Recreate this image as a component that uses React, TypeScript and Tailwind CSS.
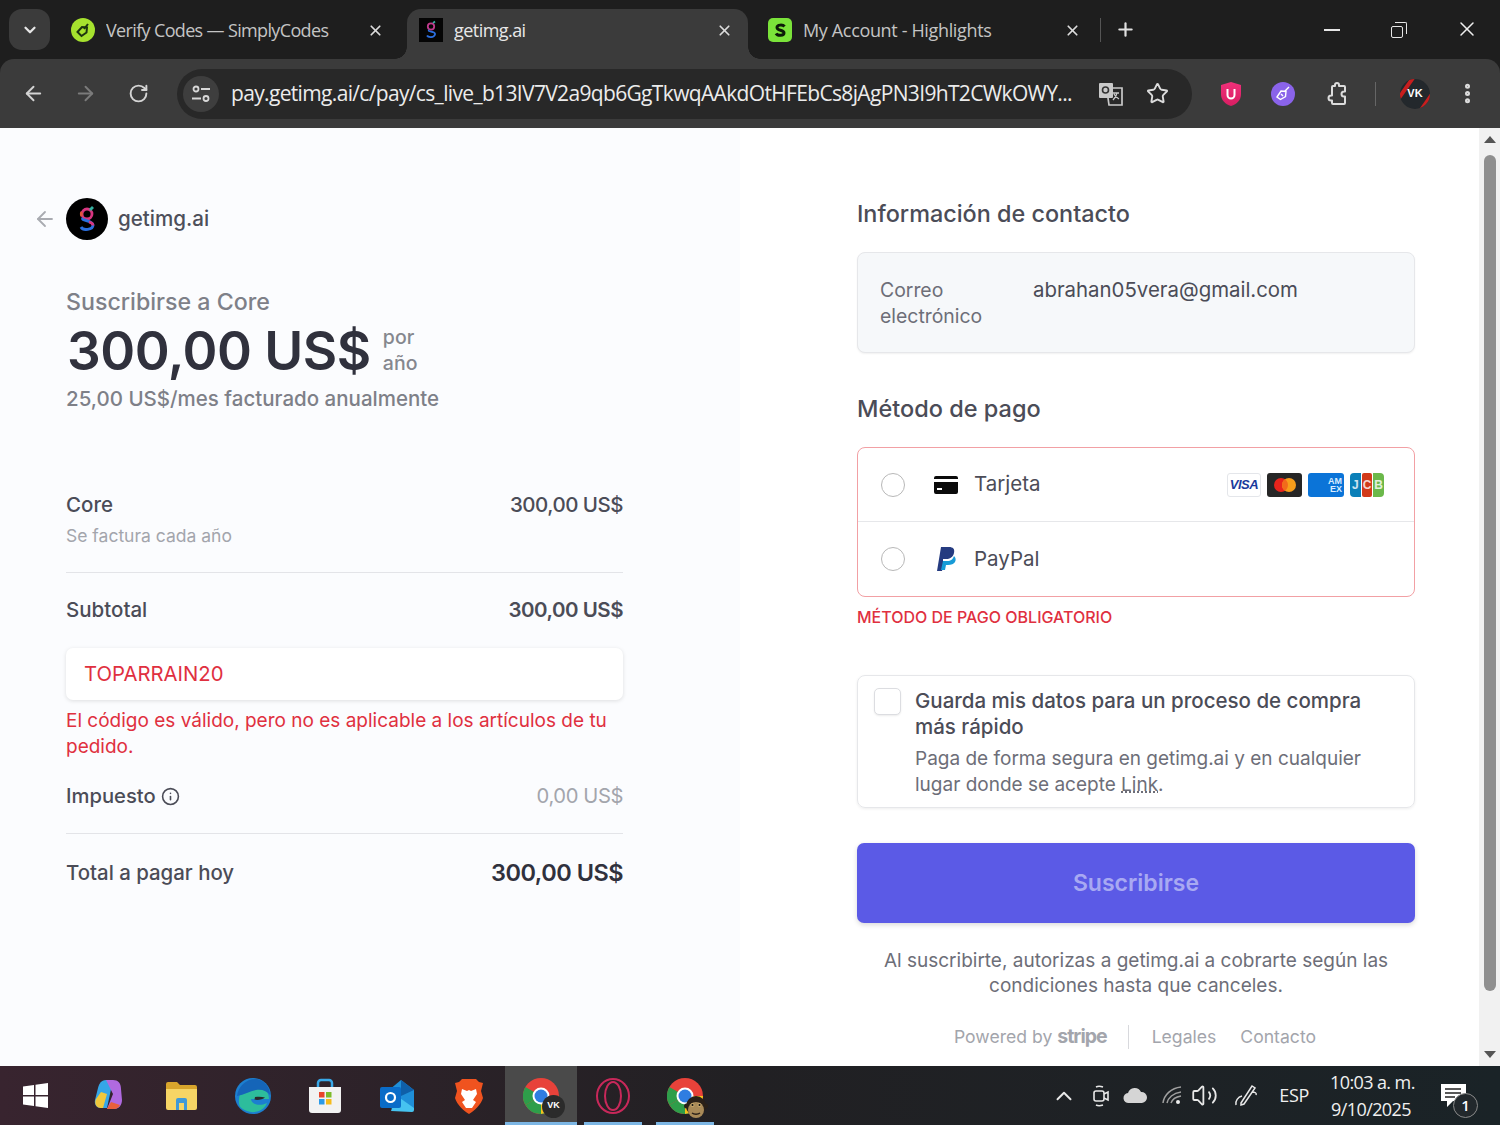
import React from "react";
import { ArrowLeft, ArrowRight, RotateCw, X, Plus, ChevronDown, Star, EllipsisVertical, ChevronUp, Volume2, Info } from "lucide-react";

const tabFont = { fontFamily: '"Open Sans","Noto Sans",sans-serif' };

function Favicon({ kind }: { kind: string }) {
  if (kind === "simply")
    return (
      <svg width="24" height="24" viewBox="0 0 24 24">
        <circle cx="12" cy="12" r="12" fill="#a6e22e" />
        <path d="M6.500 14l4.500-5 5 .5-.5 5-5 3.500z" fill="none" stroke="#1c3310" strokeWidth="2" />
        <path d="M13 11l4-5" stroke="#1c3310" strokeWidth="2" />
      </svg>
    );
  if (kind === "g")
    return (
      <svg width="24" height="24" viewBox="0 0 24 24">
        <rect width="24" height="24" fill="#050505" />
        <circle cx="12" cy="8.500" r="3.200" fill="none" stroke="#c03a8c" strokeWidth="1.800" />
        <path d="M10 12c-2 2 7 1 6 4.500s-7 3-8 1" fill="none" stroke="#2c6fe0" strokeWidth="1.800" />
        <path d="M14 5l2-1.500" stroke="#35b0a0" strokeWidth="1.600" />
      </svg>
    );
  return (
    <svg width="24" height="24" viewBox="0 0 24 24">
      <rect width="24" height="24" rx="5" fill="#7be33a" />
      <path d="M16.500 8.500C15 6.500 9 6.500 9 9.500c0 3.500 7 2 7 5.500 0 3-6.500 3-8 .5" fill="none" stroke="#0d1a08" strokeWidth="3" />
    </svg>
  );
}

function Tab({ title, kind, active, w, mr, track }: { title: string; kind: string; active?: boolean; w: string; mr: string; track: string }) {
  return (
    <div className={`${w} h-[50px] pb-[8px] flex items-center shrink-0 rounded-t-[14px] relative ${active ? "bg-[#3b3b3b]" : ""}`}>
      {active && <div className="absolute -left-[12px] bottom-0 w-[12px] h-[12px] bg-[radial-gradient(circle_at_0_0,transparent_11.5px,#3b3b3b_12px)]" />}
      {active && <div className="absolute -right-[12px] bottom-0 w-[12px] h-[12px] bg-[radial-gradient(circle_at_100%_0,transparent_11.5px,#3b3b3b_12px)]" />}
      <div className="w-[24px] shrink-0 ml-[12px]"><Favicon kind={kind} /></div>
      <span style={tabFont} className={`ml-[11px] flex-1 text-[18px] ${track} truncate ${active ? "text-[#e8e8e8]" : "text-[#c4c4c4]"}`}>{title}</span>
      <X size={17} strokeWidth={2.4} className={`text-[#dcdcdc] ${mr} shrink-0`} />
    </div>
  );
}

function Translate() {
  return (
    <svg width="26" height="26" viewBox="0 0 26 26" fill="none" stroke="#c9c9c9" strokeWidth="1.700">
      <rect x="1" y="2" width="14" height="15" rx="1" fill="#c9c9c9" stroke="none" />
      <path d="M15 7h9v17H11l-1-7" />
      <circle cx="7.500" cy="9" r="3" stroke="#333" strokeWidth="1.600" />
      <path d="M15 12h6M19 12c-.5 3-2 5-4 7M16 13c1 2 3 4 5 5" strokeWidth="1.300" />
    </svg>
  );
}

function Visa() {
  return (
    <div className="w-[34px] h-[24px] rounded-[3px] bg-white border border-[#e4e6ea] flex items-center justify-center text-[13px] font-extrabold italic text-[#1a3a9c] tracking-[-0.5px]" style={{ fontFamily: '"Liberation Sans",sans-serif' }}>VISA</div>
  );
}
function Master() {
  return (
    <div className="w-[35px] h-[24px] rounded-[3px] bg-[#262626] flex items-center justify-center">
      <svg width="24" height="16" viewBox="0 0 24 16">
        <circle cx="8" cy="8" r="7" fill="#e8241c" />
        <circle cx="16" cy="8" r="7" fill="#f79e1b" />
        <path d="M12 2.300a7 7 0 0 1 0 11.400a7 7 0 0 1 0-11.400z" fill="#f26a1b" />
      </svg>
    </div>
  );
}
function Amex() {
  return (
    <div className="w-[36px] h-[24px] rounded-[3px] bg-[#0b74d8] flex flex-col items-end justify-center pr-[2px] text-[9px] leading-[8px] font-bold text-[#d9ecff]" style={{ fontFamily: '"Liberation Sans",sans-serif' }}>
      <span>AM</span><span>EX</span>
    </div>
  );
}
function Jcb() {
  return (
    <div className="w-[34px] h-[24px] flex gap-[1px] text-[12px] leading-[24px] font-bold text-white/80 text-center" style={{ fontFamily: '"Liberation Sans",sans-serif' }}>
      <div className="flex-1 rounded-l-[4px] bg-[#0b7fb8]">J</div>
      <div className="flex-1 rounded-[2px] bg-[#d13a1a]">C</div>
      <div className="flex-1 rounded-r-[4px] bg-[#6bb84a]">B</div>
    </div>
  );
}

function Radio() {
  return <div className="w-[24px] h-[24px] rounded-full border-[1.5px] border-[#b8b8b8] bg-white shrink-0" />;
}

function Tb({ children, active, under }: { children: React.ReactNode; active?: boolean; under?: boolean }) {
  return (
    <div className={`w-[72px] h-[59px] flex items-center justify-center relative shrink-0 ${active ? "bg-[#4a4a4a]" : ""}`}>
      {children}
      {under && <div className="absolute left-0 right-0 mx-auto bottom-0 h-[3px] w-[58px] bg-[#7cb6e4]" />}
      {active && <div className="absolute left-0 right-0 bottom-0 h-[3px] bg-[#7cb6e4]" />}
    </div>
  );
}

function ChromeIcon({ badge }: { badge: "vk" | "ape" }) {
  return (
    <div className="relative w-[36px] h-[36px]">
      <svg width="36" height="36" viewBox="0 0 36 36">
        <circle cx="18" cy="18" r="18" fill="#e8423a" />
        <path d="M18 18L2.400 27A18 18 0 0 1 2.400 9z" fill="#2e9e4a" />
        <path d="M18 18L33.600 27A18 18 0 0 1 2.400 27z" fill="#2e9e4a" />
        <path d="M18 18h18a18 18 0 0 1-9 15.600L18 36z" fill="#f6c21c" />
        <circle cx="18" cy="18" r="8.500" fill="#fff" />
        <circle cx="18" cy="18" r="6.500" fill="#2f7de1" />
      </svg>
      {badge === "vk" ? (
        <div className="absolute right-[-6px] bottom-[-4px] w-[23px] h-[23px] rounded-full bg-[#2b2b2b] flex items-center justify-center text-[9px] font-bold text-white" style={{ fontFamily: '"Liberation Sans",sans-serif' }}>VK</div>
      ) : (
        <svg className="absolute right-[-5px] bottom-[-6px]" width="24" height="25" viewBox="0 0 24 25">
          <circle cx="12" cy="11" r="10" fill="#2a2018" />
          <circle cx="2.500" cy="11" r="2.500" fill="#2a2018" />
          <circle cx="21.500" cy="11" r="2.500" fill="#2a2018" />
          <ellipse cx="12" cy="15" rx="8" ry="8" fill="#a98a58" />
          <circle cx="8.500" cy="10" r="2" fill="#c9a86c" />
          <circle cx="15.500" cy="10" r="2" fill="#c9a86c" />
          <circle cx="8.500" cy="10" r="1" fill="#111" />
          <circle cx="15.500" cy="10" r="1" fill="#111" />
          <path d="M8 18c2 1.500 6 1.500 8 0" stroke="#2a2018" strokeWidth="1.500" fill="none" />
        </svg>
      )}
    </div>
  );
}

export default function App() {
  return (
    <div className="w-[1500px] h-[1125px] flex flex-col overflow-hidden" style={{ fontFamily: 'Inter,"Liberation Sans",sans-serif' }}>
      {/* tab strip */}
      <div className="h-[59px] shrink-0 bg-[#1e1e1e] flex items-end pl-[9px]">
        <div className="w-[41px] h-[41px] mb-[9px] rounded-[13px] bg-[#3b3b3b] flex items-center justify-center shrink-0">
          <ChevronDown size={18} strokeWidth={3} className="text-[#e6e6e6]" />
        </div>
        <div className="ml-[9px] flex items-end">
          <Tab title="Verify Codes — SimplyCodes" kind="simply" w="w-[327px]" mr="mr-[2px]" track="tracking-[-0.65px]" />
        </div>
        <div className="ml-[21px]">
          <Tab title="getimg.ai" kind="g" active w="w-[341px]" mr="mr-[15px]" track="tracking-[-0.55px]" />
        </div>
        <div className="ml-[8px]">
          <Tab title="My Account - Highlights" kind="s" w="w-[332px]" mr="mr-[7px]" track="tracking-[-0.35px]" />
        </div>
        <div className="w-px h-[24px] bg-[#555] mb-[17px] ml-[12px] shrink-0" />
        <Plus size={21} strokeWidth={2.5} className="text-[#e0e0e0] mb-[19px] ml-[14px] shrink-0" />
        <div className="flex-1" />
        <div className="w-[16px] h-[2px] bg-[#e6e6e6] mb-[28px] shrink-0" />
        <div className="w-[16px] h-[16px] mb-[21px] ml-[51px] relative shrink-0">
          <div className="absolute left-[0px] bottom-0 w-[12px] h-[12px] border-[1.5px] border-[#e6e6e6] rounded-[2px]" />
          <div className="absolute right-0 top-0 w-[12px] h-[12px] border-t-[1.5px] border-r-[1.5px] border-[#e6e6e6] rounded-tr-[2px]" />
        </div>
        <X size={24} strokeWidth={1.500} className="text-[#eeeeee] mb-[18px] ml-[48px] mr-[21px] shrink-0" />
      </div>

      {/* toolbar */}
      <div className="bg-[#1e1e1e] shrink-0">
        <div className="h-[69px] bg-[#3b3b3b] rounded-t-[14px] flex items-center">
          <ArrowLeft size={23} strokeWidth={2} className="ml-[22px] text-[#d4d4d4] shrink-0" />
          <ArrowRight size={23} strokeWidth={2} className="ml-[29px] text-[#7b7b7b] shrink-0" />
          <RotateCw size={21} strokeWidth={2.200} className="ml-[31px] text-[#d4d4d4] shrink-0" />
          <div className="ml-[28px] w-[1015px] h-[50px] rounded-full bg-[#282828] flex items-center shrink-0">
            <div className="ml-[6px] w-[36px] h-[36px] rounded-full bg-[#3e3e3e] flex items-center justify-center shrink-0">
              <svg width="20" height="20" viewBox="0 0 20 20" fill="none" stroke="#d8d8d8" strokeWidth="1.800">
                <circle cx="5" cy="5" r="2.500" />
                <path d="M10 5h9M1 14.500h9" />
                <circle cx="15" cy="14.500" r="2.500" />
              </svg>
            </div>
            <span className="ml-[12px] w-[848px] text-[21px] tracking-[-0.66px] text-[#ececec] whitespace-nowrap" style={tabFont}>pay.getimg.ai/c/pay/cs_live_b13IV7V2a9qb6GgTkwqAAkdOtHFEbCs8jAgPN3I9hT2CWkOWY...</span>
            <div className="ml-[19px] shrink-0"><Translate /></div>
            <Star size={23} strokeWidth={2} className="ml-[22px] text-[#dcdcdc] shrink-0" />
          </div>
          <div className="ml-[26px] w-[26px] h-[26px] shrink-0">
            <svg width="26" height="30" viewBox="0 0 26 30">
              <defs>
                <linearGradient id="sh" x1="0" y1="0" x2="0" y2="1">
                  <stop offset="0" stopColor="#f0307a" />
                  <stop offset="1" stopColor="#d81e62" />
                </linearGradient>
              </defs>
              <path d="M13 1l10 3v9c0 6-4 10-10 12C7 23 3 19 3 13V4z" fill="url(#sh)" />
              <path d="M9.500 8v6a3.500 3.500 0 0 0 7 0V8" fill="none" stroke="#fff" strokeWidth="2" />
            </svg>
          </div>
          <div className="ml-[27px] w-[24px] h-[24px] rounded-full bg-[#8a63ea] flex items-center justify-center shrink-0">
            <svg width="18" height="18" viewBox="0 0 18 18" fill="none" stroke="#fff" strokeWidth="1.400"><path d="M3 12l4-6 5 .5-.5 5-5 3zM11 6l4-4M7 9l2 2" /></svg>
          </div>
          <svg className="ml-[30px] shrink-0" width="24" height="24" viewBox="0 0 24 24" fill="none" stroke="#dcdcdc" strokeWidth="2" strokeLinejoin="round">
            <path d="M9 4h2V3a2 2 0 0 1 4 0v1h5a1 1 0 0 1 1 1v4.500h-1a2.500 2.500 0 0 0 0 5h1V21a1 1 0 0 1-1 1H9a1 1 0 0 1-1-1v-2.500H7a2.500 2.500 0 0 1 0-5h1V5a1 1 0 0 1 1-1z" transform="translate(-1 0)" />
          </svg>
          <div className="ml-[26px] w-px h-[24px] bg-[#666] shrink-0" />
          <div className="ml-[24px] w-[30px] h-[30px] rounded-full bg-[#23282c] flex items-center justify-center text-[11px] font-bold text-white shrink-0 relative overflow-hidden" style={{ fontFamily: '"Liberation Sans",sans-serif' }}>
            <div className="absolute w-[40px] h-[4px] bg-[#c81e1e] rotate-[-55deg] left-[-12px] top-[4px]" />
            <div className="absolute w-[40px] h-[4px] bg-[#c81e1e] rotate-[-55deg] left-[6px] top-[22px]" />
            <span className="relative">VK</span>
          </div>
          <EllipsisVertical size={25} strokeWidth={2.800} className="ml-[25px] text-[#dcdcdc] shrink-0" />
        </div>
      </div>

      {/* content */}
      <div className="flex-1 flex min-h-0">
        <div className="w-[740px] shrink-0 bg-[#fbfcfe] pt-[70px] pl-[66px] pr-[117px] text-[#30313d]">
          <div className="flex items-center h-[42px]">
            <ArrowLeft size={24} strokeWidth={1.800} className="-ml-[33px] text-[#a9abb1] shrink-0" />
            <div className="ml-[9px] w-[42px] h-[42px] rounded-full bg-black flex items-center justify-center shrink-0">
              <svg width="24" height="30" viewBox="0 0 24 30" fill="none" strokeWidth="2.800">
                <circle cx="12" cy="10" r="5" stroke="#d8357f" />
                <path d="M8 14c-3 3 10 2 10 7s-10 6-12 2" stroke="#2a6fe0" />
                <path d="M15 6l3-3" stroke="#35b0a0" />
                <path d="M7 8c-1 1-1 3 0 4" stroke="#e0553a" />
                <path d="M14 18c2 .5 4 1.500 4 3.500" stroke="#d8357f" />
              </svg>
            </div>
            <span className="ml-[10px] text-[20.600px] font-medium text-[#4e4f5a]">getimg.ai</span>
          </div>

          <div className="mt-[47px] text-[23.200px] leading-[30px] font-medium text-[#7e8088]">Suscribirse a Core</div>
          <div className="flex items-center mt-[4px] h-[60px]">
            <span className="ml-[1px] text-[53px] leading-[60px] font-semibold text-[#30313d] tracking-[-0.5px] whitespace-nowrap">300,00 US$</span>
            <span className="ml-[12px] -mt-[3px] text-[19.500px] leading-[26px] font-medium text-[#85878e] w-[50px]">por<br />año</span>
          </div>
          <div className="mt-[3px] text-[20.500px] leading-[30px] font-medium text-[#7e8088]">25,00 US$/mes facturado anualmente</div>

          <div className="mt-[76px] flex justify-between items-center h-[30px] text-[20.500px] font-medium text-[#4b4c57]">
            <span>Core</span><span className="tracking-[-0.5px]">300,00 US$</span>
          </div>
          <div className="mt-[3px] text-[17.500px] leading-[26px] text-[#a3a5ac]">Se factura cada año</div>
          <div className="mt-[23px] h-px bg-[#e3e4e8]" />
          <div className="mt-[22px] flex justify-between items-center h-[30px] text-[20.500px] font-semibold text-[#4b4c57]">
            <span className="font-medium">Subtotal</span><span className="tracking-[-0.5px]">300,00 US$</span>
          </div>
          <div className="mt-[23px] h-[52px] bg-white rounded-[7px] shadow-[0_1px_4px_rgba(0,0,0,0.12)] flex items-center pl-[18px] text-[20.300px] text-[#e0303f]">TOPARRAIN20</div>
          <div className="mt-[8px] text-[19px] leading-[26px] text-[#e0303f]">El código es válido, pero no es aplicable a los artículos de tu pedido.</div>
          <div className="mt-[21px] flex justify-between items-center h-[30px] text-[20.200px]">
            <span className="flex items-center font-medium text-[#4b4c57]">Impuesto<Info size={19} strokeWidth={2} className="ml-[5px] text-[#4b4c57]" /></span>
            <span className="text-[#a3a5ac] tracking-[-0.4px]">0,00 US$</span>
          </div>
          <div className="mt-[22px] h-px bg-[#e3e4e8]" />
          <div className="mt-[24px] flex justify-between items-center h-[30px] font-medium text-[#4b4c57]">
            <span className="text-[20.400px]">Total a pagar hoy</span><span className="text-[23.500px] font-semibold text-[#30313d] tracking-[-0.5px]">300,00 US$</span>
          </div>
        </div>

        <div className="flex-1 bg-white pt-[71px] pl-[117px] pr-[64px] text-[#30313d]">
          <div className="h-[30px] text-[23.400px] leading-[30px] font-medium text-[#4b4c57]">Información de contacto</div>
          <div className="mt-[23px] h-[101px] rounded-[8px] border border-[#e6e7ea] bg-[#f6f8fa] shadow-[0_1px_2px_rgba(0,0,0,0.06)] flex pl-[22px] pt-[24px] leading-[26px]">
            <div className="w-[153px] text-[19.400px] text-[#6d6e78] shrink-0">Correo electrónico</div>
            <div className="text-[#4b4c57] text-[20.400px]">abrahan05vera@gmail.com</div>
          </div>

          <div className="mt-[41px] h-[30px] text-[23.500px] leading-[30px] font-medium text-[#4b4c57]">Método de pago</div>
          <div className="mt-[23px] h-[150px] rounded-[8px] border-[1.5px] border-[#f2a0a4] overflow-hidden">
            <div className="h-[74px] flex items-center pl-[23px] border-b border-[#e6e7ea]">
              <Radio />
              <svg className="ml-[29px] shrink-0" width="24" height="18" viewBox="0 0 24 18">
                <path d="M0 2a2 2 0 0 1 2-2h20a2 2 0 0 1 2 2v1H0zM0 6h24v10a2 2 0 0 1-2 2H2a2 2 0 0 1-2-2z" fill="#0a0a0a" />
                <rect x="3" y="12" width="5" height="2" fill="#fff" />
              </svg>
              <span className="ml-[16px] text-[20.500px] text-[#4b4c57]">Tarjeta</span>
              <div className="ml-auto mr-[30px] flex gap-[6px] items-center">
                <Visa /><Master /><Amex /><Jcb />
              </div>
            </div>
            <div className="h-[74px] flex items-center pl-[23px]">
              <Radio />
              <svg className="ml-[30px] shrink-0" width="22" height="26" viewBox="0 0 22 26">
                <path d="M8 20l-1 5H2L6 1h8c4 0 6 2 5 6s-4 6-8 6H8z" fill="#253b80" />
                <path d="M10 24H6l2-9h4c4 0 6-2 7-5 2 2 2 4 1 6s-4 3-7 3h-2z" fill="#179bd7" />
              </svg>
              <span className="ml-[17px] text-[20.500px] text-[#4b4c57]">PayPal</span>
            </div>
          </div>
          <div className="mt-[9px] h-[22px] text-[16px] leading-[22px] font-medium text-[#e0303f]">MÉTODO DE PAGO OBLIGATORIO</div>

          <div className="mt-[47px] h-[133px] rounded-[8px] border border-[#e6e7ea] shadow-[0_1px_3px_rgba(0,0,0,0.07)] flex pl-[16px] pt-[12px] pr-[20px]">
            <div className="w-[27px] h-[27px] rounded-[5px] border border-[#dcdde1] bg-white shadow-[0_1px_2px_rgba(0,0,0,0.08)] shrink-0" />
            <div className="ml-[14px]">
              <div className="text-[20.500px] leading-[26px] font-medium text-[#4b4c57]">Guarda mis datos para un proceso de compra más rápido</div>
              <div className="mt-[6px] text-[19px] leading-[25.500px] text-[#6d6e78]">Paga de forma segura en getimg.ai y en cualquier lugar donde se acepte <span className="underline decoration-dotted">Link</span>.</div>
            </div>
          </div>

          <div className="mt-[35px] h-[80px] rounded-[7px] bg-[#5b5ae6] shadow-[0_2px_5px_rgba(0,0,0,0.15)] flex items-center justify-center text-[23px] font-semibold text-[#a8a9f2]">Suscribirse</div>

          <div className="mt-[25px] text-center text-[19px] leading-[25px] text-[#6d6e78]">Al suscribirte, autorizas a getimg.ai a cobrarte según las<br />condiciones hasta que canceles.</div>

          <div className="mt-[26px] flex items-center justify-center text-[17.600px] text-[#a3a5ac] h-[26px] pr-[2px]">
            <span>Powered by</span>
            <span className="ml-[5px] font-bold text-[#a3a5ac] text-[19.500px] tracking-[-1px]">stripe</span>
            <div className="ml-[21px] w-px h-[24px] bg-[#d8d9dd]" />
            <span className="ml-[23px]">Legales</span>
            <span className="ml-[24px]">Contacto</span>
          </div>
        </div>

        {/* scrollbar */}
        <div className="w-[21px] shrink-0 bg-[#f1f1f1] flex flex-col items-center">
          <div className="mt-[8px] w-0 h-0 border-l-[6px] border-r-[6px] border-b-[7px] border-l-transparent border-r-transparent border-b-[#555]" />
          <div className="mt-[12px] w-[12px] h-[836px] rounded-full bg-[#8f8f8f]" />
          <div className="mt-[60px] w-0 h-0 border-l-[6px] border-r-[6px] border-t-[7px] border-l-transparent border-r-transparent border-t-[#555]" />
        </div>
      </div>

      {/* taskbar */}
      <div className="h-[59px] shrink-0 bg-gradient-to-r from-[#38242f] via-[#212023] to-[#1a2327] flex items-center text-[#f0f0f0]">
        <svg className="ml-[23px] shrink-0" width="25" height="25" viewBox="0 0 25 25" fill="#fff">
          <path d="M0 3.500l11-1.500v10H0zM12.500 1.800L25 0v12H12.500zM0 13.500h11V23L0 21.500zM12.500 13.500H25V25l-12.500-1.800z" />
        </svg>
        <div className="ml-[25px] flex items-center shrink-0">
          <Tb>
            <svg width="34" height="36" viewBox="0 0 34 36">
              <path d="M14 2c-5 0-7 4-8 8L3 22c-1 5 2 8 6 8h6l6-28z" fill="#35a6e8" />
              <path d="M9 30c-5 0-7-5-5-9l5-7 6 2-4 14z" fill="#f0c83c" />
              <path d="M14 2h7c5 0 8 3 8 9l1 11c0 5-3 9-8 9h-7l6-15z" fill="#b06ae0" />
              <path d="M15 31h7c3 0 5-2 6-4l-9-3z" fill="#e8603c" />
            </svg>
          </Tb>
          <Tb>
            <svg width="33" height="29" viewBox="0 0 33 29">
              <path d="M1 3a2 2 0 0 1 2-2h9l3 3h15a2 2 0 0 1 2 2v3H1z" fill="#d8a52c" />
              <path d="M1 8h31v19a2 2 0 0 1-2 2H3a2 2 0 0 1-2-2z" fill="#f6d565" />
              <path d="M11 29V19a2 2 0 0 1 2-2h7a2 2 0 0 1 2 2v10h-3v-7h-5v7z" fill="#3f9ad8" />
            </svg>
          </Tb>
          <Tb>
            <svg width="36" height="36" viewBox="0 0 36 36">
              <circle cx="18" cy="18" r="18" fill="#1c7fd0" />
              <path d="M4 24C3 10 16 3 26 8c6 3 8 9 8 13H16c0 5 8 8 16 4-3 8-13 11-20 8S4 28 4 24z" fill="#2dbd9c" />
              <path d="M2 18C3 8 12 0 22 1c7 1 13 8 13 16-3-4-8-6-14-5s-12 5-19 6z" fill="#1565b8" />
              <path d="M20 19c3-.5 7-.5 10 .5-2 2-8 3-10.500 2z" fill="#2a2a2c" />
            </svg>
          </Tb>
          <Tb>
            <svg width="34" height="36" viewBox="0 0 34 36">
              <path d="M10 9V5a3 3 0 0 1 3-3h8a3 3 0 0 1 3 3v4" fill="none" stroke="#38a8e8" strokeWidth="2.500" />
              <path d="M1 9h32v23a3 3 0 0 1-3 3H4a3 3 0 0 1-3-3z" fill="#f2f2f2" />
              <rect x="11" y="14" width="5.500" height="5.500" fill="#e8442a" />
              <rect x="18" y="14" width="5.500" height="5.500" fill="#7dbb2a" />
              <rect x="11" y="21" width="5.500" height="5.500" fill="#2a9ae8" />
              <rect x="18" y="21" width="5.500" height="5.500" fill="#f5bb1c" />
            </svg>
          </Tb>
          <Tb>
            <svg width="36" height="36" viewBox="0 0 36 36">
              <path d="M10 12L22 2l13 10v18a3 3 0 0 1-3 3H13z" fill="#1f8fd8" />
              <path d="M22 2l13 10-13 6z" fill="#0f5fa8" />
              <path d="M12 33l6-15 17 12v2a2 2 0 0 1-2 2z" fill="#46c3f0" />
              <rect x="1" y="9" width="21" height="21" rx="2" fill="#0a6cc8" />
              <circle cx="11.500" cy="19.500" r="4.500" fill="none" stroke="#fff" strokeWidth="2.200" />
            </svg>
          </Tb>
          <Tb>
            <svg width="30" height="36" viewBox="0 0 30 36">
              <path d="M8 1h14l3 3 4 1-2 8 2 7c-2 7-9 13-14 16C10 33 3 27 1 20l2-7-2-8 4-1z" fill="#f0531f" />
              <path d="M8 11l5 2 2-1 2 1 5-2 1 5-4 6 3 2-4 6h-6l-4-6 3-2-4-6z" fill="#fff" />
            </svg>
          </Tb>
          <Tb active><ChromeIcon badge="vk" /></Tb>
          <Tb under>
            <svg width="36" height="36" viewBox="0 0 36 36" fill="none" stroke="#c8285a" strokeWidth="2">
              <ellipse cx="18" cy="18" rx="16" ry="17" />
              <ellipse cx="18" cy="18" rx="8" ry="14" />
            </svg>
          </Tb>
          <Tb under><ChromeIcon badge="ape" /></Tb>
        </div>
        <div className="flex-1" />
        <ChevronUp size={26} strokeWidth={1.800} className="mr-[15px] text-[#e8e8e8] shrink-0" />
        <svg className="mr-[13px] shrink-0" width="18" height="24" viewBox="0 0 18 24" fill="none" stroke="#e8e8e8" strokeWidth="1.600">
          <path d="M4 3c2-1 4-1 7 0M4 21c2 1 4 1 7 0" />
          <rect x="2" y="7" width="10" height="10" rx="2" />
          <path d="M12 10l4-2v8l-4-2" />
        </svg>
        <svg className="mr-[14px] shrink-0" width="25" height="17" viewBox="0 0 25 17"><path d="M6 16a5 5 0 0 1-1-10 7 7 0 0 1 13-1 5.500 5.500 0 0 1 1 11z" fill="#d5d5d5" /></svg>
        <svg className="mr-[9px] shrink-0" width="20" height="20" viewBox="0 0 20 20" fill="none" stroke="#a0a0a0" strokeWidth="1.500">
          <path d="M1 17C2 9 9 2 19 1M5 17c1-5 6-10 14-11M9 17c1-3 4-6 10-7" />
          <circle cx="16" cy="16" r="2" fill="#eee" stroke="none" />
        </svg>
        <Volume2 size={27} strokeWidth={1.600} className="mr-[16px] text-[#e8e8e8] shrink-0" />
        <svg className="mr-[20px] shrink-0" width="25" height="25" viewBox="0 0 25 25" fill="none" stroke="#e8e8e8" strokeWidth="1.500">
          <path d="M7 20L18 3l3 2-11 16-3 1zM18 9c3 0 5 1 4 3M8 13c-4 1-7 5-6 9" />
        </svg>
        <span className="mr-[21px] text-[18px] shrink-0 tracking-[-0.3px]" style={tabFont}>ESP</span>
        <div className="w-[82px] mr-[29px] shrink-0 text-center text-[18px] leading-[27px] tracking-[-0.6px]" style={tabFont}>
          <div className="whitespace-nowrap">10:03 a. m.</div>
          <div className="whitespace-nowrap">9/10/2025</div>
        </div>
        <div className="relative w-[26px] h-[26px] mr-[33px] shrink-0">
          <svg width="26" height="26" viewBox="0 0 26 26">
            <path d="M0 1h25v17H12l-6 6v-6H0z" fill="#fff" />
            <path d="M4 6h16M4 10h16M4 14h10" stroke="#222" strokeWidth="1.500" />
          </svg>
          <div className="absolute left-[12px] top-[10px] w-[25px] h-[25px] rounded-full bg-[#22282c] border-[1.5px] border-[#8a8a8a] flex items-center justify-center text-[15px] font-semibold text-white" style={tabFont}>1</div>
        </div>
      </div>
    </div>
  );
}
